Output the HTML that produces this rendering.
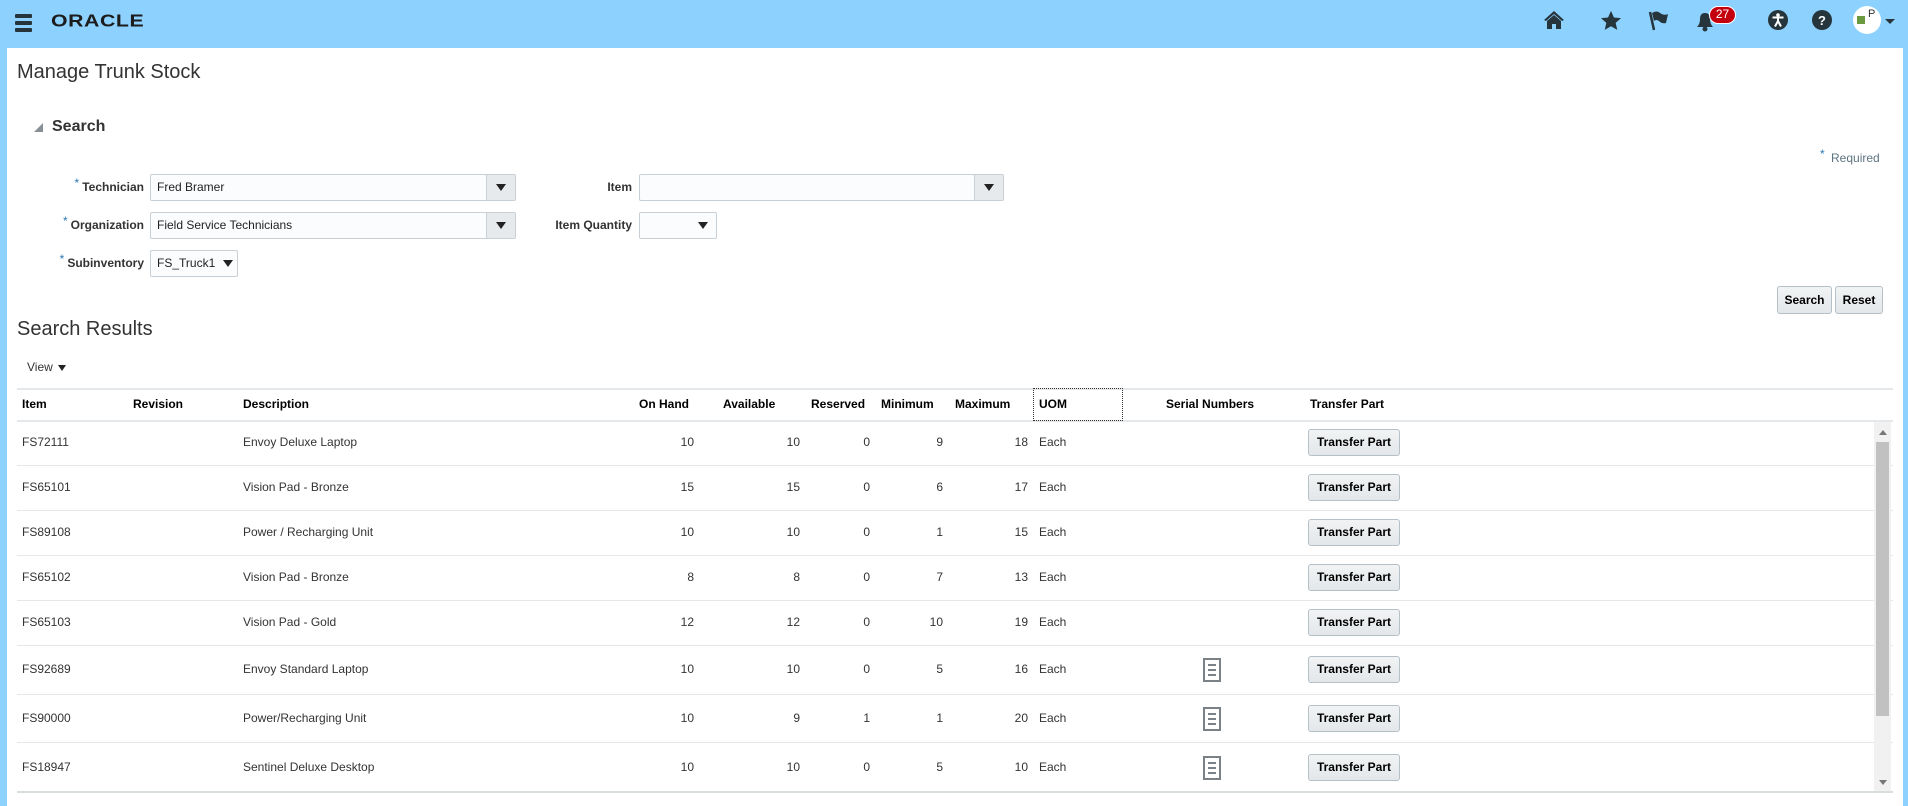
<!DOCTYPE html>
<html><head><meta charset="utf-8"><style>
*{box-sizing:border-box;margin:0;padding:0}
body{width:1908px;height:806px;overflow:hidden;background:#8dd2fe;font-family:"Liberation Sans",Arial,sans-serif;font-size:12px;color:#333;position:relative}
.abs{position:absolute}
#main{position:absolute;left:7px;top:48px;width:1896px;height:758px;background:#fff}
.lbl{position:absolute;font-weight:bold;color:#333;font-size:12px;text-align:right;line-height:14px}
.req{color:#2a7ab8;font-weight:normal;font-size:12px;position:relative;top:-4px;margin-right:3px}
.inp{position:absolute;border:1px solid #c8d0d6;border-radius:2px;background:#fbfcfd;font-size:12px;padding-left:6px;color:#222}
.dd{position:absolute;right:0;top:0;bottom:0;width:29px;border-left:1px solid #c8d0d6;background:#e6eaed;text-align:center}
.tri{display:inline-block;width:0;height:0;border-left:5px solid transparent;border-right:5px solid transparent;border-top:7px solid #222}
.btn{position:absolute;border:1px solid #b6c0c7;border-radius:3px;background:linear-gradient(#f1f3f4,#e3e7ea);font-weight:bold;font-size:12px;color:#000;text-align:center}
.h{position:absolute;top:397px;font-weight:bold;font-size:12px;color:#000}
.c{position:absolute;font-size:12px;color:#333}
.line{position:absolute;left:17px;width:1876px;height:1px;background:#e4e8ea}
</style></head><body>
<div class="abs" style="left:15px;top:14px;width:17px;height:4px;background:#26343c;border-radius:1px"></div>
<div class="abs" style="left:15px;top:21px;width:17px;height:4px;background:#26343c;border-radius:1px"></div>
<div class="abs" style="left:15px;top:28px;width:17px;height:4px;background:#26343c;border-radius:1px"></div>
<div class="abs" style="left:51px;top:11px;font-size:19px;font-weight:bold;letter-spacing:0.5px;color:#1c1c1c;transform:scaleX(1.12) scaleY(0.9);transform-origin:left">ORACLE</div>
<svg class="abs" style="left:1543px;top:10px" width="22" height="20" viewBox="0 0 22 20"><path d="M11 1 L1 10 L3 11 L11 4 L19 11 L21 10Z" fill="#26343c"/><path d="M4 11 L11 5 L18 11 V19 H13 V14 H9 V19 H4Z" fill="#26343c"/></svg>
<svg class="abs" style="left:1600px;top:10px" width="22" height="21" viewBox="0 0 24 23"><path d="M12 1l3.2 7.2 7.8.7-5.9 5.2 1.8 7.7L12 17.8 5.1 21.8l1.8-7.7L1 8.9l7.8-.7z" fill="#26343c"/></svg>
<svg class="abs" style="left:1648px;top:10px" width="22" height="22" viewBox="0 0 22 22"><path d="M2 2 L6 20" stroke="#26343c" stroke-width="2.5"/><path d="M4 3 Q9 0 12 3 Q16 6 20 4 L18 13 Q14 14 11 11 Q8 9 6 11Z" fill="#26343c"/></svg>
<svg class="abs" style="left:1694px;top:10px" width="22" height="22" viewBox="0 0 22 22"><path d="M3 17 Q6 14 6 9 Q6 3 11 3 Q16 3 16 9 Q16 14 19 17Z" fill="#26343c"/><circle cx="11" cy="19" r="2.5" fill="#26343c"/></svg>
<div class="abs" style="left:1709px;top:6px;width:27px;height:18px;border-radius:9px;background:#c5000e;border:1.5px solid #fff;color:#fff;font-size:12px;text-align:center;line-height:15px">27</div>
<svg class="abs" style="left:1768px;top:10px" width="20" height="20" viewBox="0 0 20 20"><circle cx="10" cy="10" r="10" fill="#26343c"/><circle cx="10" cy="5" r="1.8" fill="#fff"/><path d="M4.5 7.5 H15.5 M10 7.5 V12 M10 11 L7 16.5 M10 11 L13 16.5" stroke="#fff" stroke-width="2" fill="none"/></svg>
<svg class="abs" style="left:1812px;top:10px" width="20" height="20" viewBox="0 0 20 20"><circle cx="10" cy="10" r="10" fill="#26343c"/><text x="10" y="15" font-size="13" font-weight="bold" fill="#fff" text-anchor="middle" font-family="Liberation Sans">?</text></svg>
<div class="abs" style="left:1853px;top:6px;width:28px;height:28px;border-radius:50%;background:#fff;overflow:hidden"><div style="position:absolute;left:4px;top:10px;width:8px;height:8px;background:#6a9a40"></div><span style="position:absolute;left:15px;top:2px;font-size:11px;color:#333">P</span></div>
<div class="abs" style="left:1885px;top:19px;width:0;height:0;border-left:5px solid transparent;border-right:5px solid transparent;border-top:5px solid #26343c"></div>

<div id="main"></div>
<div class="abs" style="left:17px;top:61px;font-size:20px;color:#333">Manage Trunk Stock</div>
<div class="abs" style="left:34px;top:123px;width:0;height:0;border-left:9px solid transparent;border-bottom:9px solid #8a8f93"></div>
<div class="abs" style="left:52px;top:118px;font-size:16px;font-weight:bold;color:#333">Search</div>
<div class="abs" style="left:1820px;top:151px;font-size:12px;color:#5d7480"><span class="req">*</span> Required</div>

<div class="lbl" style="left:40px;width:104px;top:180px"><span class="req">*</span>Technician</div>
<div class="inp" style="left:150px;top:174px;width:366px;height:27px;line-height:25px">Fred Bramer<div class="dd" style="line-height:24px"><span class="tri"></span></div></div>
<div class="lbl" style="left:40px;width:104px;top:218px"><span class="req">*</span>Organization</div>
<div class="inp" style="left:150px;top:212px;width:366px;height:27px;line-height:25px">Field Service Technicians<div class="dd" style="line-height:24px"><span class="tri"></span></div></div>
<div class="lbl" style="left:40px;width:104px;top:256px"><span class="req">*</span>Subinventory</div>
<div class="inp" style="left:150px;top:250px;width:88px;height:27px;line-height:25px">FS_Truck1 <span class="tri" style="margin-left:4px"></span></div>

<div class="lbl" style="left:520px;width:112px;top:180px">Item</div>
<div class="inp" style="left:639px;top:174px;width:365px;height:27px"><div class="dd" style="line-height:24px"><span class="tri"></span></div></div>
<div class="lbl" style="left:520px;width:112px;top:218px">Item Quantity</div>
<div class="inp" style="left:639px;top:212px;width:78px;height:27px;line-height:24px;text-align:right;padding-right:8px"><span class="tri"></span></div>

<div class="btn" style="left:1777px;top:286px;width:55px;height:28px;line-height:26px">Search</div>
<div class="btn" style="left:1835px;top:286px;width:48px;height:28px;line-height:26px">Reset</div>

<div class="abs" style="left:17px;top:318px;font-size:20px;color:#333">Search Results</div>
<div class="abs" style="left:27px;top:360px;font-size:12px;color:#333">View <span class="tri" style="margin-left:2px;border-top-width:6px;border-left-width:4px;border-right-width:4px"></span></div>

<div class="line" style="top:388px;height:2px"></div>
<div class="line" style="top:420px;height:2px"></div>
<div class="h" style="left:22px">Item</div>
<div class="h" style="left:133px">Revision</div>
<div class="h" style="left:243px">Description</div>
<div class="h" style="left:639px">On Hand</div>
<div class="h" style="left:723px">Available</div>
<div class="h" style="left:811px">Reserved</div>
<div class="h" style="left:881px">Minimum</div>
<div class="h" style="left:955px">Maximum</div>
<div class="abs" style="left:1033px;top:388px;width:90px;height:33px;border:1px dotted #333"></div>
<div class="h" style="left:1039px">UOM</div>
<div class="h" style="left:1166px">Serial Numbers</div>
<div class="h" style="left:1310px">Transfer Part</div>

<div class="c" style="left:22px;top:435px">FS72111</div><div class="c" style="left:243px;top:435px">Envoy Deluxe Laptop</div>
<div class="c" style="left:600px;width:94px;text-align:right;top:435px">10</div><div class="c" style="left:700px;width:100px;text-align:right;top:435px">10</div><div class="c" style="left:800px;width:70px;text-align:right;top:435px">0</div><div class="c" style="left:880px;width:63px;text-align:right;top:435px">9</div><div class="c" style="left:950px;width:78px;text-align:right;top:435px">18</div><div class="c" style="left:1039px;top:435px">Each</div>
<div class="btn" style="left:1308px;top:429px;width:92px;height:27px;line-height:25px">Transfer Part</div>
<div class="line" style="top:465px"></div>

<div class="c" style="left:22px;top:480px">FS65101</div><div class="c" style="left:243px;top:480px">Vision Pad - Bronze</div>
<div class="c" style="left:600px;width:94px;text-align:right;top:480px">15</div><div class="c" style="left:700px;width:100px;text-align:right;top:480px">15</div><div class="c" style="left:800px;width:70px;text-align:right;top:480px">0</div><div class="c" style="left:880px;width:63px;text-align:right;top:480px">6</div><div class="c" style="left:950px;width:78px;text-align:right;top:480px">17</div><div class="c" style="left:1039px;top:480px">Each</div>
<div class="btn" style="left:1308px;top:474px;width:92px;height:27px;line-height:25px">Transfer Part</div>
<div class="line" style="top:510px"></div>

<div class="c" style="left:22px;top:525px">FS89108</div><div class="c" style="left:243px;top:525px">Power / Recharging Unit</div>
<div class="c" style="left:600px;width:94px;text-align:right;top:525px">10</div><div class="c" style="left:700px;width:100px;text-align:right;top:525px">10</div><div class="c" style="left:800px;width:70px;text-align:right;top:525px">0</div><div class="c" style="left:880px;width:63px;text-align:right;top:525px">1</div><div class="c" style="left:950px;width:78px;text-align:right;top:525px">15</div><div class="c" style="left:1039px;top:525px">Each</div>
<div class="btn" style="left:1308px;top:519px;width:92px;height:27px;line-height:25px">Transfer Part</div>
<div class="line" style="top:555px"></div>

<div class="c" style="left:22px;top:570px">FS65102</div><div class="c" style="left:243px;top:570px">Vision Pad - Bronze</div>
<div class="c" style="left:600px;width:94px;text-align:right;top:570px">8</div><div class="c" style="left:700px;width:100px;text-align:right;top:570px">8</div><div class="c" style="left:800px;width:70px;text-align:right;top:570px">0</div><div class="c" style="left:880px;width:63px;text-align:right;top:570px">7</div><div class="c" style="left:950px;width:78px;text-align:right;top:570px">13</div><div class="c" style="left:1039px;top:570px">Each</div>
<div class="btn" style="left:1308px;top:564px;width:92px;height:27px;line-height:25px">Transfer Part</div>
<div class="line" style="top:600px"></div>

<div class="c" style="left:22px;top:615px">FS65103</div><div class="c" style="left:243px;top:615px">Vision Pad - Gold</div>
<div class="c" style="left:600px;width:94px;text-align:right;top:615px">12</div><div class="c" style="left:700px;width:100px;text-align:right;top:615px">12</div><div class="c" style="left:800px;width:70px;text-align:right;top:615px">0</div><div class="c" style="left:880px;width:63px;text-align:right;top:615px">10</div><div class="c" style="left:950px;width:78px;text-align:right;top:615px">19</div><div class="c" style="left:1039px;top:615px">Each</div>
<div class="btn" style="left:1308px;top:609px;width:92px;height:27px;line-height:25px">Transfer Part</div>
<div class="line" style="top:645px"></div>

<div class="c" style="left:22px;top:662px">FS92689</div><div class="c" style="left:243px;top:662px">Envoy Standard Laptop</div>
<div class="c" style="left:600px;width:94px;text-align:right;top:662px">10</div><div class="c" style="left:700px;width:100px;text-align:right;top:662px">10</div><div class="c" style="left:800px;width:70px;text-align:right;top:662px">0</div><div class="c" style="left:880px;width:63px;text-align:right;top:662px">5</div><div class="c" style="left:950px;width:78px;text-align:right;top:662px">16</div><div class="c" style="left:1039px;top:662px">Each</div>
<svg class="abs" style="left:1203px;top:658px" width="18" height="24" viewBox="0 0 18 24"><rect x="1" y="1" width="16" height="22" fill="none" stroke="#7b8287" stroke-width="2"/><path d="M5 7H13M5 12H13M5 17H13" stroke="#7b8287" stroke-width="2"/></svg>
<div class="btn" style="left:1308px;top:656px;width:92px;height:27px;line-height:25px">Transfer Part</div>
<div class="line" style="top:694px"></div>

<div class="c" style="left:22px;top:711px">FS90000</div><div class="c" style="left:243px;top:711px">Power/Recharging Unit</div>
<div class="c" style="left:600px;width:94px;text-align:right;top:711px">10</div><div class="c" style="left:700px;width:100px;text-align:right;top:711px">9</div><div class="c" style="left:800px;width:70px;text-align:right;top:711px">1</div><div class="c" style="left:880px;width:63px;text-align:right;top:711px">1</div><div class="c" style="left:950px;width:78px;text-align:right;top:711px">20</div><div class="c" style="left:1039px;top:711px">Each</div>
<svg class="abs" style="left:1203px;top:707px" width="18" height="24" viewBox="0 0 18 24"><rect x="1" y="1" width="16" height="22" fill="none" stroke="#7b8287" stroke-width="2"/><path d="M5 7H13M5 12H13M5 17H13" stroke="#7b8287" stroke-width="2"/></svg>
<div class="btn" style="left:1308px;top:705px;width:92px;height:27px;line-height:25px">Transfer Part</div>
<div class="line" style="top:742px"></div>

<div class="c" style="left:22px;top:760px">FS18947</div><div class="c" style="left:243px;top:760px">Sentinel Deluxe Desktop</div>
<div class="c" style="left:600px;width:94px;text-align:right;top:760px">10</div><div class="c" style="left:700px;width:100px;text-align:right;top:760px">10</div><div class="c" style="left:800px;width:70px;text-align:right;top:760px">0</div><div class="c" style="left:880px;width:63px;text-align:right;top:760px">5</div><div class="c" style="left:950px;width:78px;text-align:right;top:760px">10</div><div class="c" style="left:1039px;top:760px">Each</div>
<svg class="abs" style="left:1203px;top:756px" width="18" height="24" viewBox="0 0 18 24"><rect x="1" y="1" width="16" height="22" fill="none" stroke="#7b8287" stroke-width="2"/><path d="M5 7H13M5 12H13M5 17H13" stroke="#7b8287" stroke-width="2"/></svg>
<div class="btn" style="left:1308px;top:754px;width:92px;height:27px;line-height:25px">Transfer Part</div>
<div class="line" style="top:791px;height:2px;background:#d8dde0"></div>

<div class="abs" style="left:1874px;top:422px;width:17px;height:369px;background:#f1f1f1"></div>
<div class="abs" style="left:1876px;top:442px;width:13px;height:274px;background:#c1c1c1"></div>
<div class="abs" style="left:1879px;top:430px;width:0;height:0;border-left:4px solid transparent;border-right:4px solid transparent;border-bottom:5px solid #777"></div>
<div class="abs" style="left:1879px;top:780px;width:0;height:0;border-left:4px solid transparent;border-right:4px solid transparent;border-top:5px solid #777"></div>
</body></html>
